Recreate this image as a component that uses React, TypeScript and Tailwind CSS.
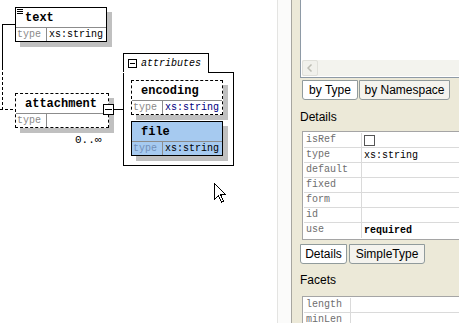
import clsx from "clsx"

// Schema diagram on the left, property panel on the right.

const MONO = "font-['Liberation_Mono','DejaVu_Sans_Mono',monospace]"
const SANS = "font-['Liberation_Sans',Arial,sans-serif]"

type BoxProps = {
  className: string
  name: string
  value?: string
  dashed?: boolean
  selected?: boolean
  valueClass?: string
  icon?: boolean
}

function ElementBox({ className, name, value, dashed, selected, valueClass, icon }: BoxProps) {
  return (
    <div
      className={clsx(
        "border border-black shadow-[5px_5px_0_#c0c0c0]",
        dashed && "border-dashed",
        selected ? "bg-[#a6caf0]" : "bg-white",
        className
      )}
    >
      <div className={clsx("relative h-[19px] flex items-center pl-[9px] text-[12px] font-bold text-black", MONO)}>
        {icon && (
          <svg className="absolute left-[1px] top-[1px]" width="6" height="5" viewBox="0 0 6 5">
            <path d="M0 0.5H6M0 2.5H6M0 4.5H6" stroke="black" strokeWidth="1" />
          </svg>
        )}
        {name}
      </div>
      <div className={clsx("flex h-[14px] border-t border-[#8c8c8c] text-[10px] leading-[13px]", MONO)}>
        <div className={clsx("w-[31px] border-r border-[#8c8c8c] pl-[1px]", selected ? "text-[#7390b8]" : "text-[#8a8a8a]")}>
          type
        </div>
        <div className={clsx("pl-[2px]", valueClass ?? "text-black")}>{value}</div>
      </div>
    </div>
  )
}

function Diagram() {
  return (
    <div className="relative w-[277px] h-[323px] bg-white shrink-0">
      {/* sequence connectors */}
      <svg className="absolute left-0 top-0" width="20" height="120" viewBox="0 0 20 120">
        <path d="M2.5 24V67M2 24.5H15" stroke="black" strokeWidth="1" fill="none" />
        <path d="M2.5 67V109M0 109.5H15" stroke="black" strokeWidth="1" strokeDasharray="3 2" fill="none" />
      </svg>

      <ElementBox className="absolute left-[15px] top-[7px] w-[92px]" name="text" value="xs:string" icon />

      <ElementBox className="absolute left-[15px] top-[93px] w-[94px]" name="attachment" dashed />

      {/* collapse toggle + connector to attributes */}
      <div className="absolute left-[103px] top-[104px] w-[11px] h-[11px] border border-black bg-white flex items-center justify-center">
        <div className="w-[7px] h-px bg-black" />
      </div>
      <div className="absolute left-[114px] top-[109px] w-[9px] h-px bg-black" />

      <div className={clsx("absolute left-[75px] top-[132px] text-[11px] text-black", MONO)}>0..∞</div>

      {/* attributes group */}
      <div className="absolute left-[123px] top-[53px] w-[111px]">
        <div className="w-[86px] h-[19px] border-l border-t border-r border-black bg-white flex items-center pl-[4px] gap-[4px]">
          <div className="w-[9px] h-[9px] border border-black flex items-center justify-center">
            <div className="w-[5px] h-px bg-black" />
          </div>
          <span className={clsx("text-[10px] italic text-black", MONO)}>attributes</span>
        </div>
        <div className="flex h-px">
          <div className="w-[85px]" />
          <div className="flex-1 bg-black" />
        </div>
        <div className="border-l border-r border-b border-black bg-white pl-[7px] pt-[7px] pb-[9px] flex flex-col gap-[6px]">
          <ElementBox className="w-[92px]" name="encoding" value="xs:string" dashed valueClass="text-[#000080]" />
          <ElementBox className="w-[92px]" name="file" value="xs:string" selected />
        </div>
      </div>

      {/* mouse pointer */}
      <svg className="absolute left-[213px] top-[182px]" width="13" height="21" viewBox="0 0 13 21" shapeRendering="crispEdges">
        <path d="M1.5 1.5V17.5L5.5 13.5L8.5 20L10.5 19L7.5 12.5H12.5Z" fill="white" stroke="black" strokeWidth="1" />
      </svg>
    </div>
  )
}

function Tab({ label, active, className }: { label: string; active?: boolean; className: string }) {
  return (
    <div
      className={clsx(
        "h-[20px] border border-[#919b9c] rounded-b-[3px] flex items-center justify-center text-[12px] text-black",
        active ? "bg-white" : "bg-[#f4f3ee]",
        className
      )}
    >
      {label}
    </div>
  )
}

function PropTable({ rows, labelWidth }: { rows: { k: string; v?: string; bold?: boolean; check?: boolean }[]; labelWidth: string }) {
  return (
    <div className="ml-[2px] w-[200px] border border-[#a5a5a5] bg-white p-px">
      {rows.map((r, i) => (
        <div key={r.k} className={clsx("flex h-[15px]", i < rows.length - 1 && "border-b border-[#dadada]")}>
          <div className={clsx(labelWidth, "border-r border-[#dadada] pl-[2px] text-[10px] leading-[14px] text-[#6e6e6e]", MONO)}>
            {r.k}
          </div>
          <div className={clsx("flex items-center pl-[2px] text-[10px] text-black", MONO, r.bold && "font-bold")}>
            {r.check ? <div className="w-[11px] h-[11px] border border-[#555] bg-white" /> : r.v}
          </div>
        </div>
      ))}
    </div>
  )
}

export default function App() {
  return (
    <div className={clsx("flex w-[459px] h-[323px] overflow-hidden bg-white", SANS)}>
      <Diagram />
      <div className="w-px bg-[#e4e4e2]" />
      <div className="w-[13px] bg-[#fbfbfa]" />

      <div className="flex-1 min-w-0 overflow-hidden border-l border-[#a7a6a0] bg-[#ece9d8] pl-[8px]">
        {/* type list with horizontal scrollbar */}
        <div className="h-[78px] w-[200px] border-l border-b border-[#8e9aa6] bg-white flex flex-col justify-end">
          <div className="h-[16px] mb-px ml-px bg-[#f3f3ee] flex">
            <div className="w-[16px] h-[16px] bg-[#f1f1ec] border border-[#e0e0da] rounded-[2px] flex items-center justify-center">
              <svg width="6" height="8" viewBox="0 0 6 8">
                <path d="M4.5 0.5L1 4L4.5 7.5" stroke="#bdbdb4" strokeWidth="1.5" fill="none" />
              </svg>
            </div>
          </div>
        </div>

        <div className="flex mt-[2px] ml-[2px] gap-[1px]">
          <Tab label="by Type" active className="w-[56px]" />
          <Tab label="by Namespace" className="w-[91px]" />
        </div>

        <div className="h-[31px] pt-[10px] text-[12px] leading-[14px] text-black">Details</div>
        <PropTable
          labelWidth="w-[58px]"
          rows={[
            { k: "isRef", check: true },
            { k: "type", v: "xs:string" },
            { k: "default" },
            { k: "fixed" },
            { k: "form" },
            { k: "id" },
            { k: "use", v: "required", bold: true },
          ]}
        />

        <div className="flex mt-[4px] gap-[2px]">
          <Tab label="Details" active className="w-[47px]" />
          <Tab label="SimpleType" className="w-[76px]" />
        </div>

        <div className="h-[32px] pt-[9px] text-[12px] leading-[14px] text-black">Facets</div>
        <PropTable labelWidth="w-[47px]" rows={[{ k: "length" }, { k: "minLen" }]} />
      </div>
    </div>
  )
}
